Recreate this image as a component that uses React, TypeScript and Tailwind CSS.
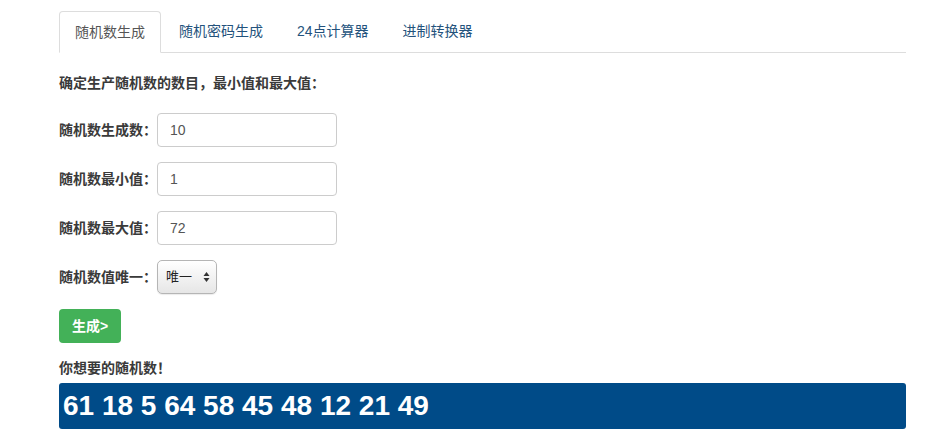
const font = '[font-family:"Liberation_Sans","Noto_Sans_CJK_SC",sans-serif]';

const tabs = ['随机数生成', '随机密码生成', '24点计算器', '进制转换器'];

const fields = [
  { label: '随机数生成数：', value: '10' },
  { label: '随机数最小值：', value: '1' },
  { label: '随机数最大值：', value: '72' },
];

export default function App() {
  return (
    <div className={`${font} bg-white min-h-[437px] w-[933px] pt-[11px] pl-[59px] text-[14px] text-[#3a3a3a]`}>
      <div className="w-[847px]">
        {/* Tabs */}
        <ul className="flex border-b border-[#ddd] h-[42px]">
          {tabs.map((t, i) => (
            <li key={t} className="mr-[2px] -mb-px">
              {i === 0 ? (
                <span className="block h-[42px] px-[15px] leading-[40px] bg-white border border-[#ddd] border-b-transparent rounded-t-[4px] text-[#555]">
                  {t}
                </span>
              ) : (
                <a href="#" className="block h-[42px] px-[16px] leading-[40px] text-[#23527c]">
                  {t}
                </a>
              )}
            </li>
          ))}
        </ul>

        <p className="mt-[20px] leading-[20px] font-bold">确定生产随机数的数目，最小值和最大值：</p>

        <div className="mt-[20px] space-y-[15px]">
          {fields.map((f) => (
            <div key={f.label} className="flex items-center">
              <label className="w-[98px] font-bold leading-[20px]">{f.label}</label>
              <input
                defaultValue={f.value}
                className="w-[180px] h-[34px] px-[12px] border border-[#ccc] rounded-[4px] text-[#555] text-[14px] outline-none"
              />
            </div>
          ))}
          <div className="flex items-center">
            <label className="w-[98px] font-bold leading-[20px]">随机数值唯一：</label>
            <div className="w-[60px] h-[34px] flex items-center justify-between pl-[8px] pr-[6px] border border-[#b5b5b5] rounded-[5px] bg-linear-to-b from-white to-[#e6e6e6] shadow-[0_1px_1px_rgba(0,0,0,0.08)] text-[13px] text-[#222]">
              <span>唯一</span>
              <svg width="7" height="12" viewBox="0 0 7 12">
                <path d="M3.5 1 L6.5 5 H0.5 Z" fill="#333" />
                <path d="M3.5 11 L6.5 7 H0.5 Z" fill="#333" />
              </svg>
            </div>
          </div>
          <button className="h-[34px] w-[62px] rounded-[4px] bg-[#43b158] text-white text-[14px] font-bold">
            生成&gt;
          </button>
        </div>

        <p className="mt-[15px] leading-[20px] font-bold">你想要的随机数！</p>

        <div className="mt-[5px] h-[46px] flex items-center px-[4px] rounded-[3px] bg-[#004b88] text-white text-[28px] font-bold">
          61 18 5 64 58 45 48 12 21 49
        </div>
      </div>
    </div>
  );
}
